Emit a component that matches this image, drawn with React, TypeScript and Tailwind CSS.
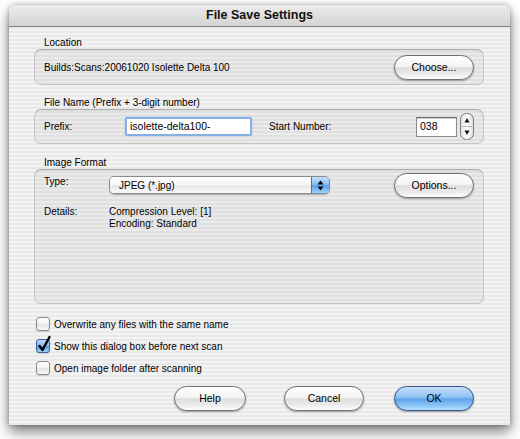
import React from 'react';

const pinstripe =
  'bg-[repeating-linear-gradient(180deg,#f3f3f3_0px,#f3f3f3_2px,#e9e9e9_2px,#e9e9e9_4px)]';

function AquaButton({ label, width, primary }: { label: string; width: string; primary?: boolean }) {
  return (
    <button
      className={`${width} h-[25px] rounded-full border text-[10.5px] leading-none flex items-center justify-center shadow-[0_1px_2px_rgba(0,0,0,0.35)] ${
        primary
          ? 'border-[#34508f] bg-[linear-gradient(to_bottom,#c6e0fa_0%,#8cc0f2_45%,#5fa3ea_52%,#86c3f6_80%,#b7e2ff_100%)]'
          : 'border-[#6f6f6f] bg-[linear-gradient(to_bottom,#ffffff_0%,#f4f4f4_45%,#dedede_52%,#ececec_80%,#ffffff_100%)]'
      }`}
    >
      {label}
    </button>
  );
}

function GroupBox({ className, children }: { className: string; children: React.ReactNode }) {
  return (
    <div
      className={`rounded-[7px] border border-[#c4c4c4] border-t-[#adadad] bg-black/[0.035] shadow-[inset_0_1px_1px_rgba(0,0,0,0.06)] ${className}`}
    >
      {children}
    </div>
  );
}

function Checkbox({ label, checked }: { label: string; checked?: boolean }) {
  return (
    <div className="h-[22px] flex items-center pl-[2px]">
      <div className="relative w-[14px] h-[14px]">
        <div
          className={`w-[14px] h-[14px] rounded-[3px] border ${
            checked
              ? 'border-[#3f5f98] bg-[linear-gradient(to_bottom,#b9dbfb_0%,#7db7ef_50%,#5c9fe6_55%,#9fd2fb_100%)]'
              : 'border-[#8a8a8a] bg-[linear-gradient(to_bottom,#ffffff_0%,#f2f2f2_50%,#e2e2e2_55%,#fafafa_100%)]'
          } shadow-[0_1px_1px_rgba(0,0,0,0.15)]`}
        />
        {checked && (
          <svg className="absolute left-0 top-[-4px]" width="16" height="18" viewBox="0 0 16 18">
            <path d="M3.5 11 L6.5 15 L13.5 2" fill="none" stroke="#000" strokeWidth="2.4" strokeLinecap="round" strokeLinejoin="round" />
          </svg>
        )}
      </div>
      <span className="ml-[4px]">{label}</span>
    </div>
  );
}

function Stepper() {
  return (
    <svg width="14" height="27" viewBox="0 0 14 27" className="shrink-0">
      <defs>
        <linearGradient id="stp" x1="0" y1="0" x2="1" y2="0">
          <stop offset="0" stopColor="#e2e2e2" />
          <stop offset="0.5" stopColor="#ffffff" />
          <stop offset="1" stopColor="#dcdcdc" />
        </linearGradient>
      </defs>
      <rect x="0.5" y="0.5" width="13" height="26" rx="6" fill="url(#stp)" stroke="#7a7a7a" />
      <line x1="2" y1="13.5" x2="12" y2="13.5" stroke="#b5b5b5" />
      <path d="M7 5 L9.5 9.5 L4.5 9.5 Z" fill="#111" />
      <path d="M7 22 L9.5 17.5 L4.5 17.5 Z" fill="#111" />
    </svg>
  );
}

function PopupButton() {
  return (
    <div className="w-[221px] h-[18px] flex rounded-[5px] border border-[#8a8a8a] overflow-hidden shadow-[0_1px_1px_rgba(0,0,0,0.25)]">
      <div className="flex-1 pl-[9px] flex items-center bg-[linear-gradient(to_bottom,#ffffff_0%,#f5f5f5_50%,#e6e6e6_55%,#fbfbfb_100%)]">
        JPEG (*.jpg)
      </div>
      <div className="w-[18px] border-l border-[#4a6fae] flex items-center justify-center bg-[linear-gradient(to_bottom,#c3e0fb_0%,#84bdf3_48%,#5a9ee8_55%,#a4d5fd_100%)]">
        <svg width="7" height="11" viewBox="0 0 7 11">
          <path d="M3.5 0.5 L6.5 4.5 L0.5 4.5 Z" fill="#000" />
          <path d="M3.5 10.5 L6.5 6.5 L0.5 6.5 Z" fill="#000" />
        </svg>
      </div>
    </div>
  );
}

export default function App() {
  return (
    <div className="w-[520px] h-[439px] bg-white pt-[5px] pl-[9px] font-['Liberation_Sans',Arial,sans-serif] text-[10px] text-black overflow-hidden">
      <div
        className={`w-[501px] h-[420px] rounded-t-[6px] flex flex-col overflow-hidden ${pinstripe} shadow-[0_7px_14px_rgba(0,0,0,0.5),0_0_5px_rgba(0,0,0,0.3)]`}
      >
        {/* Title bar */}
        <div className="h-[22px] shrink-0 border-b border-[#7e7e7e] bg-[linear-gradient(to_bottom,#ececec,#d3d3d3)] flex items-center justify-center font-bold text-[12.5px] text-[#111]">
          File Save Settings
        </div>

        <div className="pl-[25px] pr-[26px] pt-[9px] flex flex-col">
          {/* Location */}
          <div className="pl-[10px] leading-[13px]">Location</div>
          <GroupBox className="h-[36px] flex items-center justify-between pl-[9px] pr-[9px]">
            <span>Builds:Scans:20061020 Isolette Delta 100</span>
            <AquaButton label="Choose..." width="w-[80px]" />
          </GroupBox>

          {/* File Name */}
          <div className="pl-[10px] leading-[13px] mt-[11px]">File Name (Prefix + 3-digit number)</div>
          <GroupBox className="h-[35px] flex items-center pl-[9px] pr-[9px]">
            <span className="w-[81px]">Prefix:</span>
            <div className="w-[127px] h-[19px] rounded-[2px] border-2 border-[#86afe4] shadow-[0_0_2px_#9cc1ef] bg-white flex items-center pl-[3px] text-[10.5px]">
              isolette-delta100-
            </div>
            <span className="ml-[17px] w-[147px]">Start Number:</span>
            <div className="w-[41px] h-[20px] border border-[#8c8c8c] border-t-[#6a6a6a] bg-white shadow-[inset_0_1px_1px_rgba(0,0,0,0.2)] flex items-center pl-[3px] text-[10.5px]">
              038
            </div>
            <div className="ml-[3px]">
              <Stepper />
            </div>
          </GroupBox>

          {/* Image Format */}
          <div className="pl-[10px] leading-[13px] mt-[12px]">Image Format</div>
          <GroupBox className="h-[135px] pl-[9px] pr-[9px] pt-[3px]">
            <div className="flex items-start">
              <span className="w-[65px] mt-[2px] leading-[13px]">Type:</span>
              <div className="mt-[3px]">
                <PopupButton />
              </div>
              <div className="ml-auto">
                <AquaButton label="Options..." width="w-[80px]" />
              </div>
            </div>
            <div className="flex mt-[8px] leading-[12px]">
              <span className="w-[65px]">Details:</span>
              <div className="flex flex-col">
                <span>Compression Level: [1]</span>
                <span>Encoding: Standard</span>
              </div>
            </div>
          </GroupBox>

          {/* Checkboxes */}
          <div className="mt-[9px] flex flex-col">
            <Checkbox label="Overwrite any files with the same name" />
            <Checkbox label="Show this dialog box before next scan" checked />
            <Checkbox label="Open image folder after scanning" />
          </div>

          {/* Buttons */}
          <div className="mt-[7px] flex justify-end pr-[10px]">
            <AquaButton label="Help" width="w-[72px]" />
            <div className="ml-[38px]">
              <AquaButton label="Cancel" width="w-[80px]" />
            </div>
            <div className="ml-[30px]">
              <AquaButton label="OK" width="w-[80px]" primary />
            </div>
          </div>
        </div>
      </div>
    </div>
  );
}
